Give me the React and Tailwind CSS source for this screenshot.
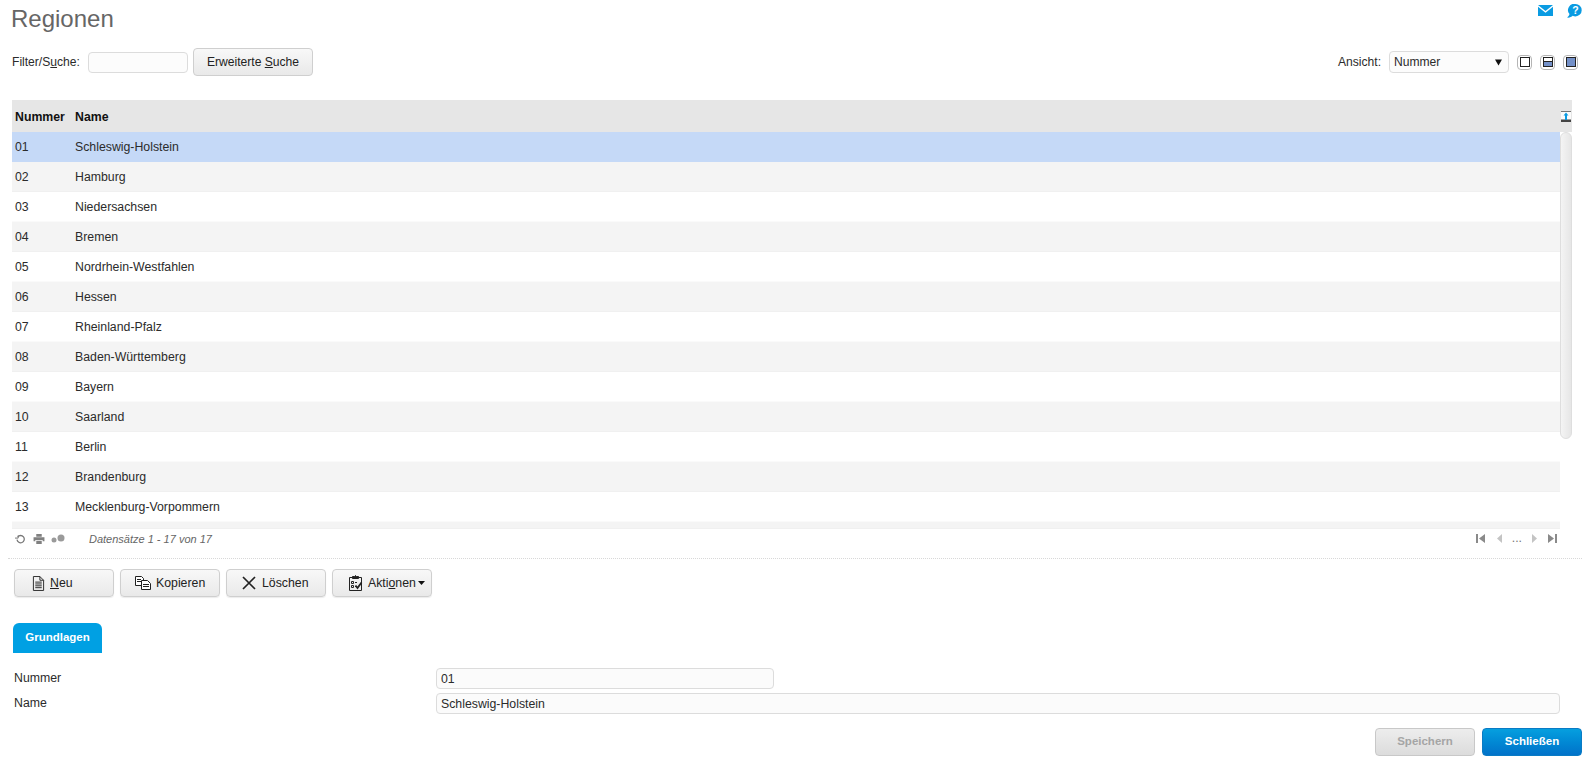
import React from 'react';

const regions = [
  ['01', 'Schleswig-Holstein'],
  ['02', 'Hamburg'],
  ['03', 'Niedersachsen'],
  ['04', 'Bremen'],
  ['05', 'Nordrhein-Westfahlen'],
  ['06', 'Hessen'],
  ['07', 'Rheinland-Pfalz'],
  ['08', 'Baden-Württemberg'],
  ['09', 'Bayern'],
  ['10', 'Saarland'],
  ['11', 'Berlin'],
  ['12', 'Brandenburg'],
  ['13', 'Mecklenburg-Vorpommern'],
];

const btn = 'h-[28px] w-[100px] rounded-[4px] border border-[#cfcfcf] bg-gradient-to-b from-[#f8f8f8] to-[#e9e9e9] text-[#222] text-[12.3px] flex items-center shadow-[0_1px_1px_rgba(0,0,0,0.08)]';

const DocIcon = () => (
  <svg width="13" height="15" viewBox="0 0 14 16" fill="none" stroke="#222" strokeWidth="1">
    <path d="M1.5 .5h7l4 4v11h-11z" />
    <path d="M8.5 .5v4h4M3.5 6.5h7M3.5 8.5h7M3.5 10.5h7M3.5 12.5h7" />
  </svg>
);

const CopyIcon = () => (
  <svg width="16" height="14" viewBox="0 0 16 14" fill="#fff" stroke="#222" strokeWidth="1">
    <path d="M.5.5h6l2 2v7h-8z" />
    <path d="M6.5 4.500h6l3 3v6h-9z" />
    <path d="M2 3.500h4M2 5.500h4M8 8.500h6M8 10.500h6" />
  </svg>
);

const CloseIcon = () => (
  <svg width="14" height="14" viewBox="0 0 14 14" fill="none" stroke="#222" strokeWidth="1.7">
    <path d="M1 1l12 12M13 1L1 13" />
  </svg>
);

const ClipboardIcon = () => (
  <svg width="15" height="16" viewBox="0 0 15 16" fill="none" stroke="#222" strokeWidth="1">
    <path d="M4 2.500H1.500v13h12v-13H11" />
    <path d="M4.500 3.500v-2h2l1-1 1 1h2v2z" fill="#222" />
    <path d="M3.500 6.500h2v2h-2zM3.500 10.500h2v2h-2zM7 7.500h2M7 11.500h1" />
    <path d="M7.500 10.500l2 2.500 4-5.500" strokeWidth="1.800" />
  </svg>
);

const ViewBtn = ({ children }) => (
  <div className="w-[15px] h-[15px] rounded-[4px] border border-[#b5b5b5] flex items-center justify-center">
    <svg width="10" height="10" viewBox="0 0 10 10">{children}</svg>
  </div>
);

const PageIcon = ({ d, dark }) => (
  <svg width="10" height="9" viewBox="0 0 10 9" fill={dark ? '#8a8a8a' : '#c4c4c4'}>
    <path d={d} />
  </svg>
);

export default function App() {
  return (
    <div className="w-[1587px] h-[769px] overflow-hidden bg-white text-[12px] text-[#2b2b2b] font-['Liberation_Sans',Arial,sans-serif]">
      {/* title row */}
      <div className="h-[48px] flex justify-between pl-[11px] pr-[5px]">
        <h1 className="text-[24px] leading-[38px] text-[#666]">Regionen</h1>
        <div className="flex gap-[14px] pt-[4px] items-start">
          <svg className="mt-[1px]" width="15" height="11" viewBox="0 0 15 11">
            <path d="M0 0h15L7.500 6z" fill="#0a9be2" />
            <path d="M0 1.800l7.500 6 7.500-6V11H0z" fill="#0a9be2" />
          </svg>
          <svg width="15" height="14" viewBox="0 0 15 14">
            <path d="M8.500 0a6.200 6.200 0 0 1 0 12.400c-1 0-2-.2-2.800-.7C4.500 13 2 14 0 13.500c1.300-.7 2.200-2 2.500-3.400A6.200 6.200 0 0 1 8.500 0z" fill="#0a9be2" />
            <text x="8.500" y="10" textAnchor="middle" fontSize="10.500" fontWeight="700" fill="#fff" fontFamily="Liberation Sans">?</text>
          </svg>
        </div>
      </div>

      {/* filter row */}
      <div className="h-[28px] flex items-center justify-between pl-[12px] pr-[9px]">
        <div className="flex items-center">
          <label className="w-[76px] text-[12.1px]">Filter/S<u>u</u>che:</label>
          <input className="w-[100px] h-[21px] rounded-[4px] border border-[#dcdcdc] bg-[#fcfcfc]" />
          <button className="ml-[5px] h-[28px] w-[120px] rounded-[4px] border border-[#cfcfcf] bg-gradient-to-b from-[#f8f8f8] to-[#e9e9e9] text-[#222] text-[12.1px]">
            Erweiterte <u>S</u>uche
          </button>
        </div>
        <div className="flex items-center">
          <span className="mr-[8px] text-[12.1px]">Ansicht:</span>
          <div className="w-[120px] h-[22px] rounded-[4px] border border-[#dcdcdc] bg-[#fcfcfc] flex items-center justify-between pl-[4px] pr-[6px] text-[12.1px]">
            <span>Nummer</span>
            <svg width="7" height="7" viewBox="0 0 8 7"><path d="M0 0h8L4 7z" fill="#111" /></svg>
          </div>
          <div className="ml-[8px] flex gap-[8px]">
            <ViewBtn><rect x=".5" y=".5" width="9" height="9" fill="#fff" stroke="#222" /></ViewBtn>
            <ViewBtn>
              <rect x=".5" y=".5" width="9" height="9" fill="#fff" stroke="#222" />
              <rect x="1" y="5" width="8" height="4" fill="#7390c8" />
              <path d="M1 4.500h8" stroke="#222" />
            </ViewBtn>
            <ViewBtn><rect x=".5" y=".5" width="9" height="9" fill="#7390c8" stroke="#222" /></ViewBtn>
          </div>
        </div>
      </div>

      {/* grid */}
      <div className="mt-[24px] ml-[12px] w-[1560px] text-[12.3px]">
        <div className="h-[32px] pt-[2px] bg-[#e6e6e6] flex items-center font-bold text-[#111]">
          <span className="w-[63px] pl-[3px]">Nummer</span>
          <span className="flex-1">Name</span>
          <svg className="mr-[1px] -translate-y-px" width="10" height="11" viewBox="0 0 10 11">
            <path d="M0 0h10v9H0z" fill="#fbfbfb" />
            <path d="M0 0h10v1H0z" fill="#777" />
            <path d="M0 8.500h10V11H0z" fill="#444" />
            <path d="M5 1.500l2.500 3H6v4.500H4V4.500H2.500z" fill="#0a9be2" />
          </svg>
        </div>
        <div className="flex h-[396px] overflow-hidden">
          <div className="w-[1548px]">
            {regions.map(([num, name], i) => (
              <div
                key={num}
                className={`h-[30px] pt-[1px] flex items-center border-b ${
                  i === 0 ? 'bg-[#c5d9f7] border-[#c5d9f7]' : i % 2 === 1 ? 'bg-[#f4f4f4] border-[#f0f0f0]' : 'bg-white border-[#fafafa]'
                }`}
              >
                <span className="w-[63px] pl-[3px]">{num}</span>
                <span>{name}</span>
              </div>
            ))}
            <div className="h-[6px] bg-[#f4f4f4]" />
          </div>
          <div className="w-[12px] h-[307px] rounded-[6px] border border-[#dedede] bg-gradient-to-r from-[#f4f4f4] to-[#e6e6e6]" />
        </div>

        {/* pager */}
        <div className="h-[30px] w-[1548px] flex items-start justify-between pt-[2px] pl-[3px] pr-[2px] border-t border-[#f0f0f0]">
          <div className="flex items-center">
            <svg width="10" height="10" viewBox="0 0 11 11" fill="none" stroke="#777" strokeWidth="1.400">
              <path d="M3 3.200a4 4 0 1 1-.8 3" />
              <path d="M0 4.500h3.500V1.500" strokeWidth="1.100" />
            </svg>
            <svg className="ml-[8px]" width="12" height="10" viewBox="0 0 12 11" fill="#808080">
              <path d="M3 0h6v3H3zM0 3.500h12V8h-2V6.500H2V8H0zM3 7.500h6V11H3z" />
            </svg>
            <svg className="ml-[6px]" width="14" height="10" viewBox="0 0 14 10" fill="#9a9a9a">
              <circle cx="3" cy="6" r="2.500" />
              <circle cx="10" cy="4" r="3.500" />
            </svg>
            <span className="ml-[24px] italic text-[#666] text-[11px]">Datensätze 1 - 17 von 17</span>
          </div>
          <div className="flex items-center gap-[8px] pt-[2px]">
            <PageIcon dark d="M0 0h2v9H0zM9 0v9L3 4.500z" />
            <PageIcon d="M8 0v9L3 4.500z" />
            <span className="text-[#777] leading-[10px]">...</span>
            <PageIcon d="M2 0v9l5-4.500z" />
            <PageIcon dark d="M0 0v9l6-4.500zM7 0h2v9H7z" />
          </div>
        </div>
      </div>

      {/* actions */}
      <div className="ml-[8px] mr-[5px] border-t border-dotted border-[#d8d8d8] pt-[10px] pl-[6px] flex gap-[6px]">
        <button className={btn}>
          <span className="ml-[17px] mr-[5px]"><DocIcon /></span>
          <span><u>N</u>eu</span>
        </button>
        <button className={btn}>
          <span className="ml-[14px] mr-[5px]"><CopyIcon /></span>
          <span>Kopieren</span>
        </button>
        <button className={btn}>
          <span className="ml-[15px] mr-[6px]"><CloseIcon /></span>
          <span>Löschen</span>
        </button>
        <button className={btn}>
          <span className="ml-[15px] mr-[5px]"><ClipboardIcon /></span>
          <span>Akti<u>o</u>nen</span>
          <svg className="ml-[2px]" width="7" height="4" viewBox="0 0 7 4"><path d="M0 0h7L3.500 4z" fill="#111" /></svg>
        </button>
      </div>

      {/* tab */}
      <div className="mt-[26px] ml-[13px] w-[89px] h-[30px] rounded-t-[6px] bg-[#00a0e3] text-white font-bold text-[11.5px] flex items-center justify-center">
        Grundlagen
      </div>

      {/* form */}
      <div className="mt-[15px] pl-[14px] pr-[27px] flex flex-col gap-[4px] text-[12.3px]">
        <div className="flex items-center h-[21px]">
          <label className="w-[422px]">Nummer</label>
          <input readOnly value="01" className="w-[338px] h-[21px] px-[4px] rounded-[4px] border border-[#dcdcdc] bg-[#fbfbfb] text-[#2b2b2b] outline-none" />
        </div>
        <div className="flex items-center h-[21px]">
          <label className="w-[422px]">Name</label>
          <input readOnly value="Schleswig-Holstein" className="flex-1 h-[21px] px-[4px] rounded-[4px] border border-[#dcdcdc] bg-[#fbfbfb] text-[#2b2b2b] outline-none" />
        </div>
      </div>

      {/* save / close */}
      <div className="mt-[14px] pr-[5px] flex justify-end gap-[7px] text-[11.5px]">
        <button className="h-[28px] w-[100px] rounded-[4px] border border-[#c8c8c8] bg-gradient-to-b from-[#ededed] to-[#dcdcdc] text-[#a5a5a5] font-bold">Speichern</button>
        <button className="h-[28px] w-[100px] rounded-[4px] border border-[#0a7bc4] bg-gradient-to-b from-[#069fdf] to-[#0272c9] text-white font-bold">Schließen</button>
      </div>
    </div>
  );
}
